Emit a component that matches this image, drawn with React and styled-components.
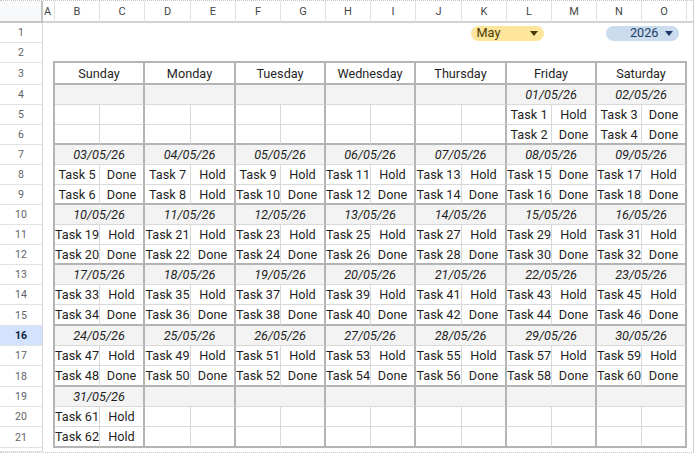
import React from 'react';
import styled, { createGlobalStyle, css } from 'styled-components';

const GlobalStyle = createGlobalStyle`
  html, body {
    margin: 0;
    padding: 0;
    background: #fff;
  }
  body {
    font-family: Roboto, "Liberation Sans", Arial, sans-serif;
  }
`;

// sheet geometry (B..O, then rows 4..21)
const COLS = [45, 45, 46, 45, 45, 45, 45, 45, 46, 45, 45, 45, 45, 45];
const LETTERS = 'BCDEFGHIJKLMNO'.split('');
const BODY_ROWS = [20, 20, 20, 20, 20, 20, 20, 20, 20, 20, 20, 21, 20, 20, 21, 20, 20, 21];
const colTemplate = COLS.map((w) => `${w}px`).join(' ');
const rowTemplate = BODY_ROWS.map((h) => `${h}px`).join(' ');

const DAYS = ['Sunday', 'Monday', 'Tuesday', 'Wednesday', 'Thursday', 'Friday', 'Saturday'];
const FIRST_WEEKDAY = 5; // 1 May 2026 is a Friday
const DAYS_IN_MONTH = 31;
const STATUS = {
  2: ['Done', 'Done'],
  3: ['Done', 'Done'],
  4: ['Hold', 'Hold'],
  8: ['Done', 'Done'],
  31: ['Hold', 'Hold'],
};

const THICK = '2px solid #b4b4b4';
const THIN = '1px solid #d9d9d9';

const Frame = styled.div`
  width: 694px;
  height: 453px;
  box-sizing: border-box;
  border-top: 1px dotted #c4c4c4;
  border-right: 1px solid #cfcfcf;
  border-bottom: 1px dotted #c4c4c4;
  overflow: hidden;
  background: #fff;
`;

const Sheet = styled.div`
  display: grid;
  grid-template-columns: 43px 12px ${colTemplate} 1fr;
  grid-template-rows: 22px 20px 20px 22px ${rowTemplate} 1fr;
  height: 100%;
`;

const Corner = styled.div`
  grid-row: 1;
  grid-column: 1;
  background: #f8f9fa;
  border-right: 2px solid #c4c7c5;
  border-bottom: 2px solid #c4c7c5;
`;

const ColHead = styled.div`
  grid-row: 1;
  display: flex;
  align-items: center;
  justify-content: ${(p) => (p.$narrow ? 'flex-start' : 'center')};
  overflow: hidden;
  box-sizing: border-box;
  border-right: 1px solid #e1e1e1;
  border-bottom: 2px solid #d3d3d3;
  font-size: 11px;
  color: #444746;
  ${(p) => p.$narrow && css`padding-left: 1px;`}
`;

const RowHead = styled.div`
  grid-column: 1;
  display: flex;
  align-items: center;
  justify-content: center;
  overflow: hidden;
  box-sizing: border-box;
  border-right: 1px solid #d6d6d6;
  border-bottom: 1px solid #e3e3e3;
  font-size: 10.5px;
  color: ${(p) => (p.$active ? '#0b1d3a' : '#5f6368')};
  font-weight: ${(p) => (p.$active ? 700 : 400)};
  background: ${(p) => (p.$active ? '#d3e3fd' : '#fff')};
`;

const Chip = styled.div`
  grid-row: 2;
  grid-column: ${(p) => p.$col};
  justify-self: center;
  align-self: center;
  width: 73px;
  height: 15px;
  box-sizing: border-box;
  padding: 0 6px;
  border-radius: 8px;
  display: flex;
  align-items: center;
  justify-content: ${(p) => (p.$right ? 'flex-end' : 'space-between')};
  gap: 6px;
  background: ${(p) => p.$bg};
  color: ${(p) => p.$fg};
  font-size: 12.7px;
  line-height: 1;
`;

const Calendar = styled.div`
  grid-column: 3 / 17;
  grid-row: 4 / 23;
  margin: -2px 0 0 -2px;
  display: grid;
  grid-template-columns: ${colTemplate};
  grid-template-rows: 22px ${rowTemplate};
  border-top: ${THICK};
  border-left: ${THICK};
  font-size: 12.7px;
  color: #1f1f1f;
`;

const Cell = styled.div`
  box-sizing: border-box;
  display: flex;
  align-items: center;
  justify-content: center;
  white-space: nowrap;
  overflow: hidden;
  background: #fff;
  border-right: ${THIN};
  border-bottom: ${(p) => (p.$last ? THICK : THIN)};
`;

const DayName = styled(Cell)`
  grid-column: span 2;
  border-right: ${THICK};
  border-bottom: ${THICK};
  padding-top: 1px;
`;

const DateCell = styled(Cell)`
  grid-column: span 2;
  background: #f3f3f3;
  font-style: italic;
  border-right: ${THICK};
`;

const TaskCell = styled(Cell)``;

const StatusCell = styled(Cell)`
  border-right: ${THICK};
`;

const Arrow = () => (
  <svg width="8" height="5" viewBox="0 0 8 5">
    <path d="M0 0h8L4 5z" fill="currentColor" />
  </svg>
);

const pad = (n) => String(n).padStart(2, '0');

function buildWeeks() {
  const weeks = [];
  for (let w = 0; w < 6; w++) {
    const days = [];
    for (let d = 0; d < 7; d++) {
      const day = w * 7 + d - FIRST_WEEKDAY + 1;
      days.push(day >= 1 && day <= DAYS_IN_MONTH ? day : null);
    }
    weeks.push(days);
  }
  return weeks;
}

const weeks = buildWeeks();

const taskRow = (days, idx, last) =>
  days.flatMap((day, i) => {
    if (!day) {
      return [
        <TaskCell key={`t${i}`} $last={last} />,
        <StatusCell key={`s${i}`} $last={last} />,
      ];
    }
    const status = STATUS[day] || ['Hold', 'Done'];
    return [
      <TaskCell key={`t${i}`} $last={last}>Task {day * 2 - 1 + idx}</TaskCell>,
      <StatusCell key={`s${i}`} $last={last}>{status[idx]}</StatusCell>,
    ];
  });

export default function App() {
  return (
    <>
      <GlobalStyle />
      <Frame>
        <Sheet>
          <Corner />
          <ColHead $narrow style={{ gridColumn: 2 }}>A</ColHead>
          {LETTERS.map((l, i) => (
            <ColHead key={l} style={{ gridColumn: i + 3 }}>{l}</ColHead>
          ))}
          <ColHead style={{ gridColumn: 17, borderRight: 'none' }} />

          {Array.from({ length: 22 }, (_, i) => (
            <RowHead key={i} $active={i + 1 === 16} style={{ gridRow: i + 2 }}>
              {i < 21 ? i + 1 : ''}
            </RowHead>
          ))}

          <Chip $col="12 / 14" $bg="#fde59c" $fg="#4a3a00">
            <span>May</span>
            <Arrow />
          </Chip>
          <Chip $col="15 / 17" $right $bg="#cadcee" $fg="#1d3b63">
            <span>2026</span>
            <Arrow />
          </Chip>

          <Calendar>
            {DAYS.map((d) => (
              <DayName key={d}>{d}</DayName>
            ))}
            {weeks.map((days, w) => (
              <React.Fragment key={w}>
                {days.map((day, i) => (
                  <DateCell key={`d${i}`}>{day ? `${pad(day)}/05/26` : ''}</DateCell>
                ))}
                {taskRow(days, 0, false)}
                {taskRow(days, 1, true)}
              </React.Fragment>
            ))}
          </Calendar>
        </Sheet>
      </Frame>
    </>
  );
}
